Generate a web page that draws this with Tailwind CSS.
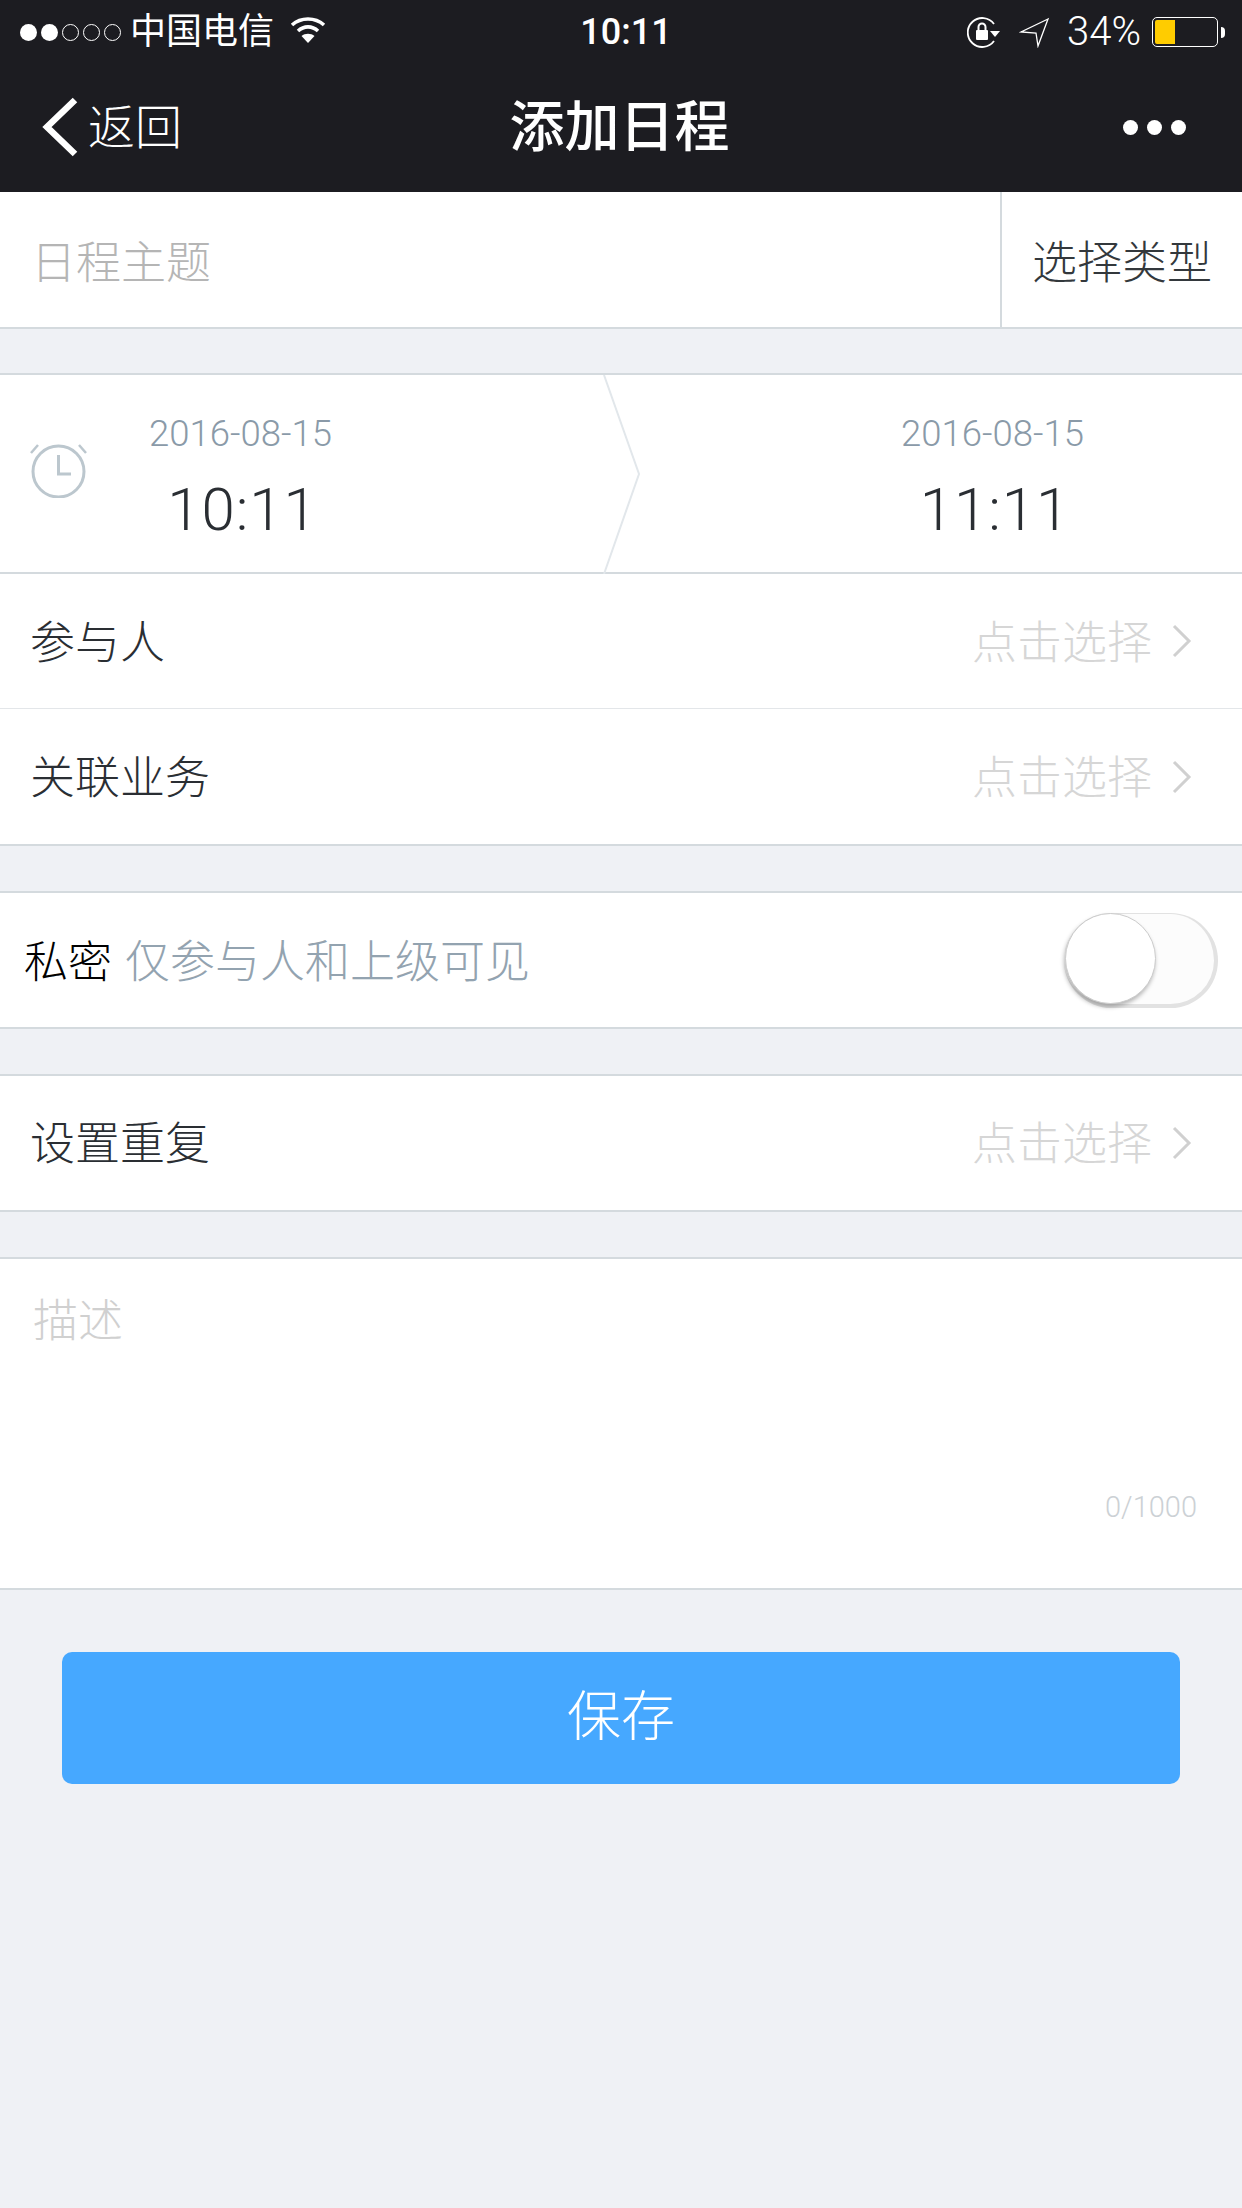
<!DOCTYPE html>
<html lang="zh-CN">
<head>
    <meta charset="UTF-8">
    <meta name="viewport" content="width=device-width, initial-scale=1.0">
    <title>添加日程</title>
    <script src="https://cdn.jsdelivr.net/npm/@tailwindcss/browser@4"></script>
</head>
<body class="bg-[#eff1f5] font-['Roboto','Noto_Sans_CJK_SC',sans-serif]">
<div class="w-[1242px] h-[2208px] flex flex-col overflow-hidden">

    <!-- Status bar + nav -->
    <header class="bg-[#1c1c21] text-white h-[192px] shrink-0 flex flex-col">
        <div class="h-[64px] pl-[20px] pr-[17px] flex items-center relative">
            <div class="flex items-center gap-[4px]">
                <span class="w-[17px] h-[17px] rounded-full bg-white"></span>
                <span class="w-[17px] h-[17px] rounded-full bg-white"></span>
                <span class="w-[17px] h-[17px] rounded-full border border-white"></span>
                <span class="w-[17px] h-[17px] rounded-full border border-white"></span>
                <span class="w-[17px] h-[17px] rounded-full border border-white"></span>
            </div>
            <span class="ml-[9px] text-[36px] leading-none">中国电信</span>
            <svg class="ml-[16px] mb-[4px]" width="36" height="28" viewBox="0 0 36 28" fill="none" stroke="white" stroke-width="3.6">
                <path d="M2 9 C11 1 25 1 34 9"/>
                <path d="M8 15 C14 9.5 22 9.5 28 15"/>
                <path d="M18 27 L11.5 20 C15 17 21 17 24.5 20 Z" fill="white" stroke="none"/>
            </svg>
            <span class="absolute left-0 w-[1252px] text-center text-[36px] leading-none font-medium">10:11</span>
            <div class="ml-auto flex items-center">
                <svg width="33" height="32" viewBox="0 0 33 32" fill="none">
                    <path d="M27 8 A14.5 14.5 0 1 0 27 25" stroke="white" stroke-width="1.8"/>
                    <path d="M23 15 L33 15 L28 21 Z" fill="white"/>
                    <rect x="9" y="14" width="12" height="10" rx="1" fill="white"/>
                    <path d="M11.5 14 V11 A3.5 3.5 0 0 1 18.5 11 V14" stroke="white" stroke-width="2"/>
                </svg>
                <svg class="ml-[19px]" width="31" height="31" viewBox="0 0 31 31" fill="none" stroke="white" stroke-width="1.3">
                    <path d="M29 2 L2 15 L17 16 L19 29 Z"/>
                </svg>
                <span class="ml-[17px] text-[40px] leading-none font-light">34%</span>
                <div class="ml-[11px] w-[66px] h-[30px] rounded-[5px] border border-white p-[2px] flex">
                    <div class="w-[20px] bg-[#ffcc00] rounded-l-[2px]"></div>
                </div>
                <div class="ml-[3px] w-[4px] h-[11px] bg-white rounded-r-full"></div>
            </div>
        </div>
        <div class="flex-1 relative flex items-center pl-[42px] pr-[56px] pb-[2px]">
            <svg width="36" height="60" viewBox="0 0 36 60" fill="none" stroke="white" stroke-width="6.5">
                <path d="M33 3 L5 30 L33 57"/>
            </svg>
            <span class="ml-[10px] text-[47px] leading-none font-light">返回</span>
            <span class="absolute left-0 right-[3px] text-center text-[55px] leading-none font-medium">添加日程</span>
            <div class="ml-auto flex gap-[9px]">
                <span class="w-[15px] h-[15px] rounded-full bg-white"></span>
                <span class="w-[15px] h-[15px] rounded-full bg-white"></span>
                <span class="w-[15px] h-[15px] rounded-full bg-white"></span>
            </div>
        </div>
    </header>

    <!-- Subject -->
    <section class="bg-white h-[137px] shrink-0 flex border-b-2 border-[#d4dade]">
        <div class="flex-1 pl-[31px] pt-[8px] flex items-center text-[45px] text-[#b5b5b5] font-light">日程主题</div>
        <div class="w-[242px] border-l-2 border-[#d4dade] flex items-center pl-[30px] pt-[8px] text-[45px] text-[#33383c] font-light">选择类型</div>
    </section>

    <!-- Time range -->
    <section class="mt-[44px] bg-white h-[201px] shrink-0 border-y-2 border-[#d4dade] relative flex">
        <svg class="absolute left-[603px] top-0" width="38" height="199" viewBox="0 0 38 199" fill="none" stroke="#e2e7eb" stroke-width="2">
            <path d="M1 0 L36 99 L1 199"/>
        </svg>
        <div class="w-[148px] shrink-0 pl-[30px] pt-[69px]">
            <svg width="57" height="54" viewBox="0 0 57 54" fill="none" stroke="#bcc7ce" stroke-width="3">
                <circle cx="28.5" cy="27.5" r="25.5"/>
                <path d="M28.5 11 V30 H41"/>
                <path d="M1 9 L8 1 M56 9 L49 1" stroke-width="2.5"/>
            </svg>
        </div>
        <div class="w-[185px] shrink-0 pt-[37px] flex flex-col items-center">
            <div class="text-[36.5px] leading-[44px] font-light text-[#8a9aa8] whitespace-nowrap">2016-08-15</div>
            <div class="mt-[19px] ml-[4px] text-[60px] leading-[70px] font-light text-[#2a2e33] whitespace-nowrap tracking-[1px]">10:11</div>
        </div>
        <div class="ml-[567px] w-[185px] shrink-0 pt-[37px] flex flex-col items-center">
            <div class="text-[36.5px] leading-[44px] font-light text-[#8a9aa8] whitespace-nowrap">2016-08-15</div>
            <div class="mt-[19px] ml-[5px] text-[60px] leading-[70px] font-light text-[#2a2e33] whitespace-nowrap tracking-[1px]">11:11</div>
        </div>
    </section>

    <!-- Participants / related -->
    <section class="bg-white shrink-0 border-b-2 border-[#d4dade]">
        <div class="h-[135px] border-b border-[#e3e6e9] flex items-center pl-[30px] pr-[50px]">
            <span class="mt-[6px] text-[45px] text-[#2a2e33] font-light">参与人</span>
            <span class="mt-[6px] ml-auto text-[45px] text-[#d6d6d6] font-light">点击选择</span>
            <svg class="ml-[20px]" width="20" height="34" viewBox="0 0 20 34" fill="none" stroke="#d0d0d0" stroke-width="3"><path d="M2 2 L17 17 L2 32"/></svg>
        </div>
        <div class="h-[135px] flex items-center pl-[30px] pr-[50px]">
            <span class="mt-[4px] text-[45px] text-[#2a2e33] font-light">关联业务</span>
            <span class="mt-[4px] ml-auto text-[45px] text-[#d6d6d6] font-light">点击选择</span>
            <svg class="ml-[20px]" width="20" height="34" viewBox="0 0 20 34" fill="none" stroke="#d0d0d0" stroke-width="3"><path d="M2 2 L17 17 L2 32"/></svg>
        </div>
    </section>

    <!-- Private -->
    <section class="mt-[45px] bg-white h-[138px] shrink-0 border-y-2 border-[#d4dade] flex items-center pl-[24px] pr-[24px]">
        <span class="mt-[6px] text-[44px] text-black font-light">私密</span>
        <span class="mt-[6px] ml-[13px] text-[45px] text-[#93a3b0] font-light">仅参与人和上级可见</span>
        <div class="ml-auto relative w-[154px] h-[95px] rounded-full bg-[#fcfcfc] border-r-4 border-b-4 border-t border-[#e2e2e2]">
            <div class="absolute left-[1px] top-[-1px] w-[91px] h-[91px] rounded-full bg-white border border-[#cccccc] shadow-[-1px_3px_4px_rgba(0,0,0,0.28)]"></div>
        </div>
    </section>

    <!-- Repeat -->
    <section class="mt-[45px] bg-white h-[138px] shrink-0 border-y-2 border-[#d4dade] flex items-center pl-[30px] pr-[50px]">
        <span class="mt-[4px] text-[45px] text-[#2a2e33] font-light">设置重复</span>
        <span class="mt-[4px] ml-auto text-[45px] text-[#d6d6d6] font-light">点击选择</span>
        <svg class="ml-[20px]" width="20" height="34" viewBox="0 0 20 34" fill="none" stroke="#d0d0d0" stroke-width="3"><path d="M2 2 L17 17 L2 32"/></svg>
    </section>

    <!-- Description -->
    <section class="mt-[45px] bg-white h-[333px] shrink-0 border-y-2 border-[#d4dade] flex flex-col pl-[33px] pr-[45px]">
        <div class="mt-[33px] text-[45px] leading-[60px] text-[#d0d0d0] font-light">描述</div>
        <div class="mt-auto mb-[66px] text-right text-[29px] leading-none text-[#ccd1d5] font-light">0/1000</div>
    </section>

    <!-- Save -->
    <div class="mt-[62px] px-[62px]">
        <button class="w-full h-[132px] rounded-[10px] bg-[#46a8ff] text-white text-[54px] font-light pb-[2px]">保存</button>
    </div>
</div>
</body>
</html>
